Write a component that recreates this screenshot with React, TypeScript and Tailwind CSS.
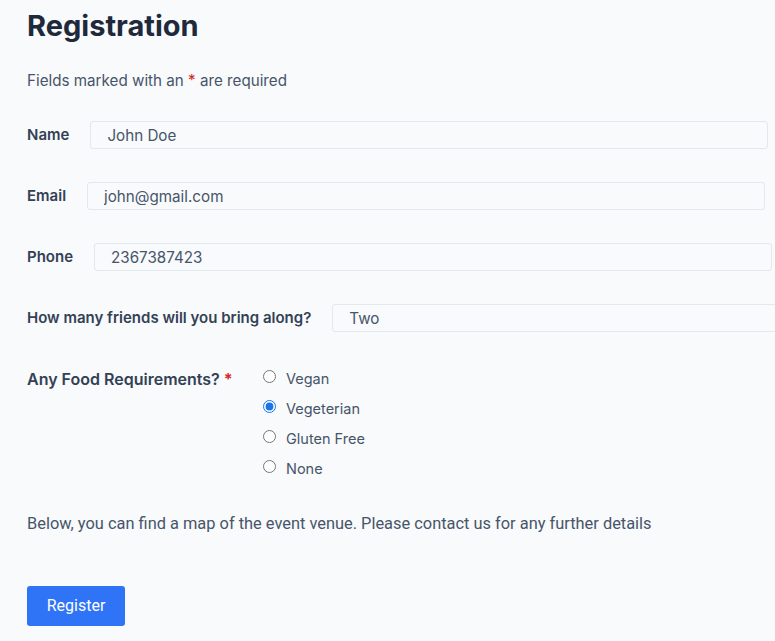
import React, { useState } from 'react';

const FIELDS = [
  { label: 'Name', value: 'John Doe' },
  { label: 'Email', value: 'john@gmail.com' },
  { label: 'Phone', value: '2367387423' },
  { label: 'How many friends will you bring along?', value: 'Two' },
];

const FOOD = ['Vegan', 'Vegeterian', 'Gluten Free', 'None'];

const App: React.FC = () => {
  const [values, setValues] = useState(FIELDS.map(f => f.value));
  const [food, setFood] = useState('Vegeterian');

  return (
    <div className="min-h-screen bg-[#f8fafc] text-[#475569] font-['Inter',sans-serif] overflow-hidden">
      <div className="pl-[27px] pt-[6px]">
        <h1 className="text-[29px] leading-[40px] font-bold text-[#1e293b]">Registration</h1>
        <p className="mt-[24px] text-[15.2px] leading-[22px]">
          Fields marked with an <span className="text-[#dc2626]">*</span> are required
        </p>

        <form className="mt-[29px]" onSubmit={e => e.preventDefault()}>
          {FIELDS.map((f, i) => (
            <div key={f.label} className="flex items-center h-[28px] mb-[33px]">
              <label className="text-[15px] font-semibold text-[#334155] whitespace-nowrap">{f.label}</label>
              <input
                type="text"
                value={values[i]}
                onChange={e => setValues(v => v.map((x, j) => (j === i ? e.target.value : x)))}
                className="ml-[21px] shrink-0 w-[678px] h-[28px] border border-[#e2e8f0] rounded-[3px] bg-[#f8fafc] pl-[16px] text-[15.2px] text-[#475569] focus:outline-none"
              />
            </div>
          ))}

          <div className="flex mt-[40px]">
            <div className="text-[16px] font-semibold text-[#334155] w-[236px] leading-[30px] -mt-[8px] whitespace-nowrap">
              Any Food Requirements? <span className="text-[#dc2626] font-bold">*</span>
            </div>
            <div className="flex flex-col -mt-[8px]">
              {FOOD.map(opt => (
                <label key={opt} className="flex items-center h-[30px] text-[14.5px] cursor-pointer">
                  <input
                    type="radio"
                    name="food"
                    checked={food === opt}
                    onChange={() => setFood(opt)}
                    className="w-[13px] h-[13px] m-0 accent-[#1a73e8] -translate-y-[3px]"
                  />
                  <span className="ml-[10px]">{opt}</span>
                </label>
              ))}
            </div>
          </div>

          <p className="mt-[29px] text-[16.4px] leading-[22px] font-['Roboto',sans-serif]">
            Below, you can find a map of the event venue. Please contact us for any further details
          </p>

          <button
            type="submit"
            className="mt-[51px] w-[98px] h-[40px] rounded-[3px] bg-[#2f73f6] text-white text-[16px] font-['Roboto',sans-serif]"
          >
            Register
          </button>
        </form>
      </div>
    </div>
  );
};

export default App;
